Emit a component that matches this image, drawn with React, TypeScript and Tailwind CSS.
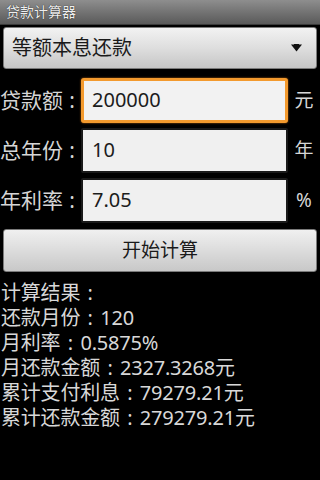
import React from "react";

const font = { fontFamily: '"Noto Sans", "Noto Sans CJK SC", sans-serif' };

function WithColon({ text, cell }: { text: string; cell: string }) {
  const i = text.indexOf("：");
  if (i < 0) return <>{text}</>;
  return (
    <>
      {text.slice(0, i)}
      <span className={cell}>:</span>
      {text.slice(i + 1)}
    </>
  );
}

function Row({ label, value, unit, focused }: { label: string; value: string; unit: string; focused?: boolean }) {
  return (
    <div className="flex items-center h-[50px]">
      <div className="w-[81px] shrink-0 text-[21px] leading-none text-[#d6d6d6] whitespace-nowrap">
        <WithColon text={label} cell="inline-block w-[18px] text-center" />
      </div>
      <div
        className={
          focused
            ? "w-[207px] h-[45px] shrink-0 rounded-[3px] border-[3px] border-[#f39a2e] bg-[#f2f2f2] flex items-center pl-[8px] shadow-[0_0_2px_#c06a10]"
            : "w-[207px] h-[45px] shrink-0 rounded-[2px] border-[2px] border-[#1a1a1a] bg-[#f0f0f0] flex items-center pl-[9px]"
        }
      >
        <span className="text-[20px] leading-none text-[#1c1c1c]">{value}</span>
      </div>
      <div className="flex-1 text-center text-[19px] leading-none text-[#d6d6d6]">{unit}</div>
    </div>
  );
}

export default function App() {
  const results = [
    "计算结果：",
    "还款月份：120",
    "月利率：0.5875%",
    "月还款金额：2327.3268元",
    "累计支付利息：79279.21元",
    "累计还款金额：279279.21元",
  ];
  return (
    <div className="w-[320px] h-[480px] bg-black overflow-hidden" style={font}>
      <div className="h-[25px] bg-gradient-to-b from-[#8e8e8e] to-[#5a5a5a] flex items-center pl-[6px] border-b border-[#3a3a3a]">
        <span className="text-[14px] leading-none text-[#eeeeee] [text-shadow:0_0_1px_#000]">贷款计算器</span>
      </div>
      <div className="mt-[2px] mx-[3px] h-[42px] rounded-[3px] border border-[#7a7a7a] bg-gradient-to-b from-[#f2f2f2] via-[#dedede] to-[#c6c6c6] flex items-center pl-[8px] pr-[14px]">
        <span className="flex-1 text-[20px] leading-none text-[#1a1a1a]">等额本息还款</span>
        <svg width="11" height="8" viewBox="0 0 11 8">
          <path d="M0 0.5 H11 L5.5 7.5 Z" fill="#111" />
          <rect x="3" y="0" width="5" height="1.5" fill="#111" />
        </svg>
      </div>
      <div className="mt-[6px]">
        <Row label="贷款额：" value="200000" unit="元" focused />
        <Row label="总年份：" value="10" unit="年" />
        <Row label="年利率：" value="7.05" unit="%" />
      </div>
      <div className="mt-[4px] mx-[3px] h-[43px] rounded-[3px] border border-[#7a7a7a] bg-gradient-to-b from-[#f0f0f0] via-[#dcdcdc] to-[#c8c8c8] flex items-center justify-center">
        <span className="text-[19px] leading-none text-[#1a1a1a]">开始计算</span>
      </div>
      <div className="mt-[8px] pl-[1px]">
        {results.map((r) => (
          <div key={r} className="text-[20px] leading-[25px] text-[#d8d8d8] whitespace-nowrap tracking-[-0.2px]">
            <WithColon text={r} cell="inline-block w-[20px] text-center" />
          </div>
        ))}
      </div>
    </div>
  );
}
